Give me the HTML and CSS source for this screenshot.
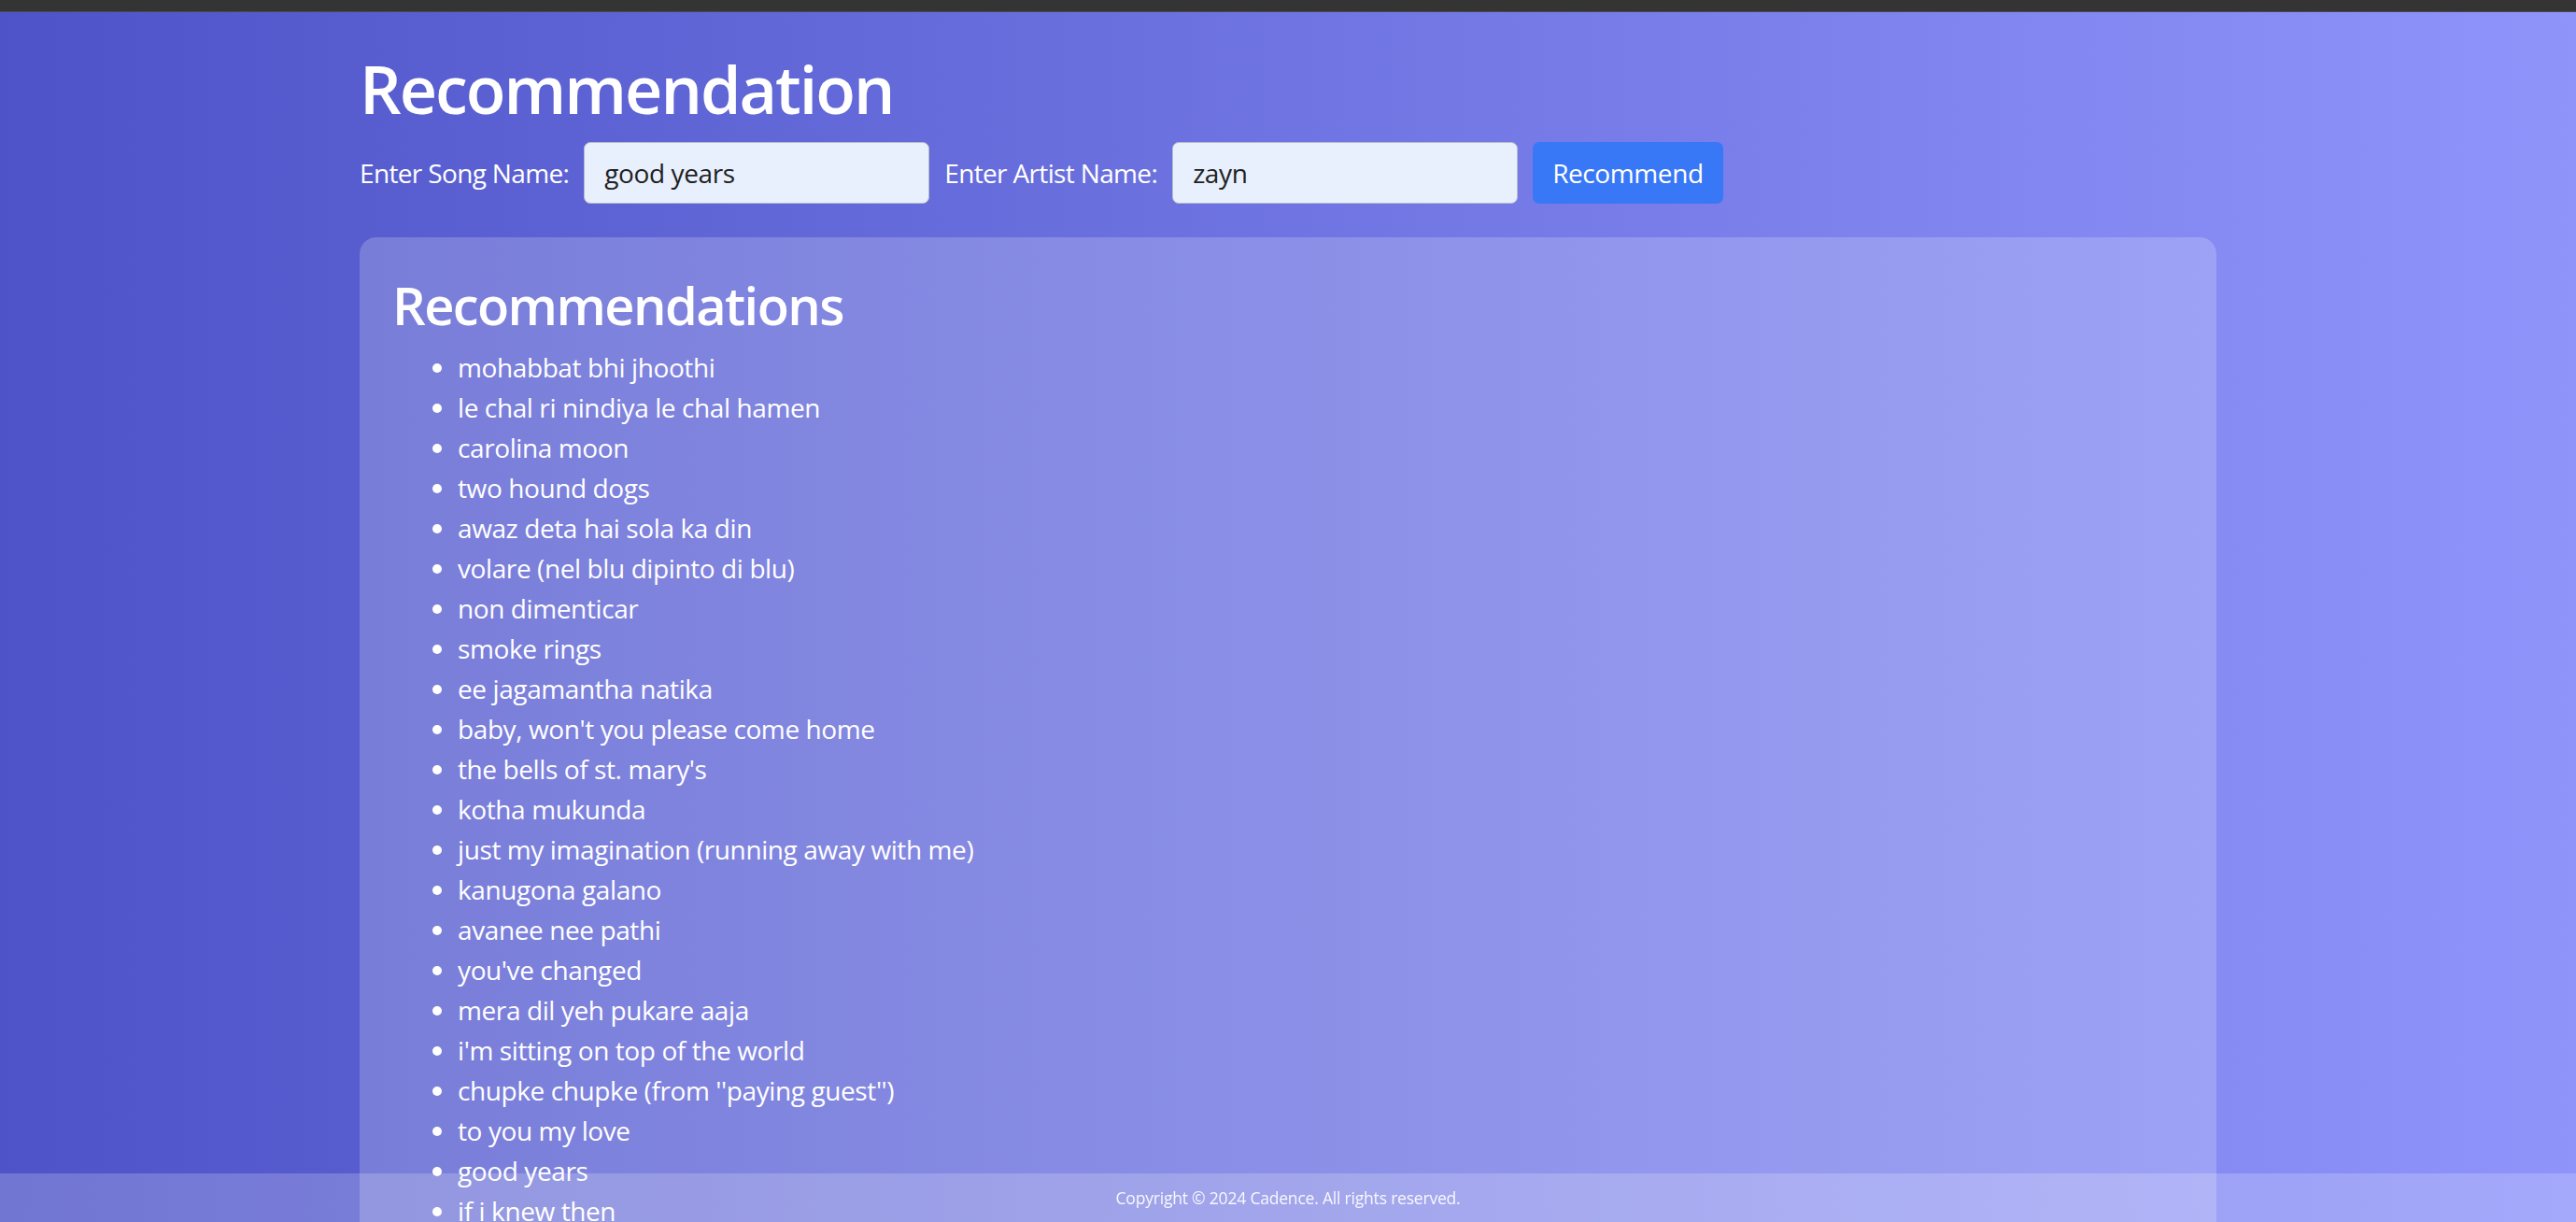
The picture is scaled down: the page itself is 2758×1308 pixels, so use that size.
FILE: index.html
```html
<!DOCTYPE html>
<html lang="en">
<head>
<meta charset="utf-8">
<title>Recommendation</title>
<link rel="stylesheet" href="styles.css">
</head>
<body>
<div class="topbar"></div>
<main class="container">
  <h1 class="title">Recommendation</h1>
  <form class="search">
    <label class="search-label" for="song">Enter Song Name:</label>
    <input class="search-input" id="song" type="text" value="good years">
    <label class="search-label" for="artist">Enter Artist Name:</label>
    <input class="search-input" id="artist" type="text" value="zayn">
    <button class="search-button" type="button">Recommend</button>
  </form>
  <section class="card">
    <h2 class="card-title">Recommendations</h2>
    <ul class="rec-list">
      <li>mohabbat bhi jhoothi</li>
      <li>le chal ri nindiya le chal hamen</li>
      <li>carolina moon</li>
      <li>two hound dogs</li>
      <li>awaz deta hai sola ka din</li>
      <li>volare (nel blu dipinto di blu)</li>
      <li>non dimenticar</li>
      <li>smoke rings</li>
      <li>ee jagamantha natika</li>
      <li>baby, won't you please come home</li>
      <li>the bells of st. mary's</li>
      <li>kotha mukunda</li>
      <li>just my imagination (running away with me)</li>
      <li>kanugona galano</li>
      <li>avanee nee pathi</li>
      <li>you've changed</li>
      <li>mera dil yeh pukare aaja</li>
      <li>i'm sitting on top of the world</li>
      <li>chupke chupke (from ''paying guest'')</li>
      <li>to you my love</li>
      <li>good years</li>
      <li>if i knew then</li>
      <li>the way you look tonight</li>
      <li>moonlight serenade</li>
    </ul>
  </section>
</main>
<footer class="footer">Copyright © 2024 Cadence. All rights reserved.</footer>
</body>
</html>
```
FILE: styles.css
```css
* { box-sizing: border-box; }

html, body {
  margin: 0;
  padding: 0;
}

body {
  font-family: "Open Sans", "Noto Sans", sans-serif;
  font-size: 28px;
  line-height: 1.5;
  letter-spacing: -0.4px;
  color: #ffffff;
  background: linear-gradient(to right, #4e54c8, #8f94fb);
  min-height: 100vh;
}

.topbar {
  height: 13px;
  background: #343434;
  border-bottom: 1px solid #4a4a4a;
}

.container {
  width: 1988px;
  margin: 0 auto;
}

.title {
  margin: 40px 0 15px;
  font-size: 70px;
  font-weight: 600;
  line-height: 1.2;
  letter-spacing: -2px;
}

.search {
  display: flex;
  align-items: center;
  gap: 16px;
}

.search-label {
  font-size: 28px;
  letter-spacing: -0.65px;
  color: #ffffff;
}

.search-input {
  width: 370px;
  height: 66px;
  padding: 0 21px;
  font-family: inherit;
  font-size: 28px;
  letter-spacing: -0.4px;
  color: #212121;
  background: #e8f0fe;
  border: 1px solid #b8bccb;
  border-radius: 7px;
  outline: none;
}

.search-button {
  height: 66px;
  padding: 0 21px;
  font-family: inherit;
  font-size: 28px;
  letter-spacing: -0.4px;
  color: #ffffff;
  background: #3878f6;
  border: none;
  border-radius: 7px;
}

.card {
  margin-top: 36px;
  padding: 35px;
  background: rgba(255, 255, 255, 0.2);
  border-radius: 18px;
}

.card-title {
  margin: 4px 0 12px;
  font-size: 56px;
  font-weight: 600;
  line-height: 1.2;
  letter-spacing: -1.6px;
}

.rec-list {
  margin: 0;
  padding-left: 70px;
  line-height: 43px;
}

.footer {
  position: fixed;
  left: 0;
  right: 0;
  bottom: 0;
  height: 52px;
  display: flex;
  align-items: center;
  justify-content: center;
  font-size: 17.5px;
  letter-spacing: -0.2px;
  color: rgba(255, 255, 255, 0.92);
  background: rgba(255, 255, 255, 0.2);
}
```
